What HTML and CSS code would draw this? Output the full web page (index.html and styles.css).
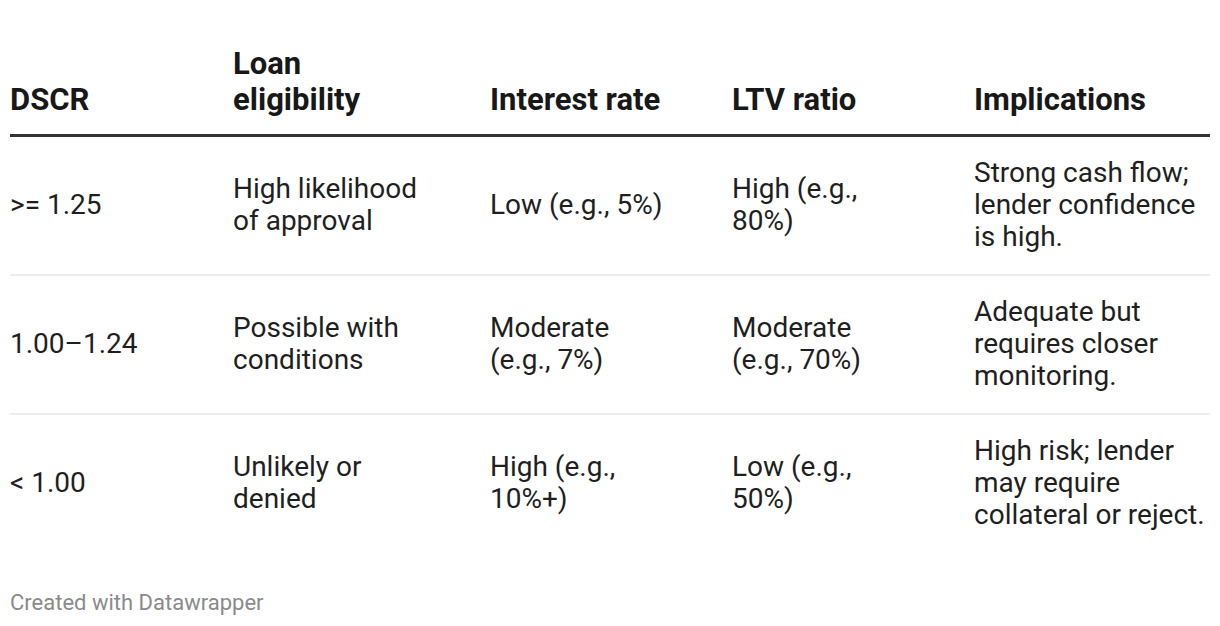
FILE: index.html
```html
<!DOCTYPE html>
<html>
<head>
<meta charset="utf-8">
<link rel="stylesheet" href="styles.css">
</head>
<body>
<div class="chart">
  <div class="table">
    <div class="row head">
      <div class="cell">DSCR</div>
      <div class="cell">Loan eligibility</div>
      <div class="cell">Interest rate</div>
      <div class="cell">LTV ratio</div>
      <div class="cell">Implications</div>
    </div>
    <div class="row">
      <div class="cell">&gt;= 1.25</div>
      <div class="cell">High likelihood of approval</div>
      <div class="cell">Low (e.g., 5%)</div>
      <div class="cell">High (e.g., 80%)</div>
      <div class="cell">Strong cash flow; lender confidence is high.</div>
    </div>
    <div class="row">
      <div class="cell">1.00–1.24</div>
      <div class="cell">Possible with conditions</div>
      <div class="cell">Moderate (e.g., 7%)</div>
      <div class="cell">Moderate (e.g., 70%)</div>
      <div class="cell">Adequate but requires closer monitoring.</div>
    </div>
    <div class="row last">
      <div class="cell">&lt; 1.00</div>
      <div class="cell">Unlikely or denied</div>
      <div class="cell">High (e.g., 10%+)</div>
      <div class="cell">Low (e.g., 50%)</div>
      <div class="cell">High risk; lender may require collateral or reject.</div>
    </div>
  </div>
  <div class="footer">Created with Datawrapper</div>
</div>
</body>
</html>
```

FILE: styles.css
```css
html, body {
  margin: 0;
  padding: 0;
  background: #ffffff;
}
body {
  font-family: Roboto, "Liberation Sans", sans-serif;
  color: #1f1f1f;
}
.chart {
  padding: 46px 10px 0 10px;
}
.table {
  width: 1200px;
}
.row {
  display: grid;
  grid-template-columns: 223px 257px 242px 242px 236px;
  align-items: center;
  border-bottom: 2px solid #ececec;
  padding: 20px 0 21px 0;
  font-size: 28px;
  line-height: 32px;
}
.row.head {
  align-items: end;
  font-size: 31px;
  line-height: 36px;
  font-weight: 700;
  color: #181818;
  border-bottom: 3px solid #333333;
  padding: 0 0 16px 0;
}
.row.last {
  border-bottom: none;
}
.cell {
  padding-right: 66px;
}
.cell:last-child {
  padding-right: 0;
}
.footer {
  margin-top: 38px;
  font-size: 22px;
  line-height: 26px;
  color: #8a8a8a;
}
```
